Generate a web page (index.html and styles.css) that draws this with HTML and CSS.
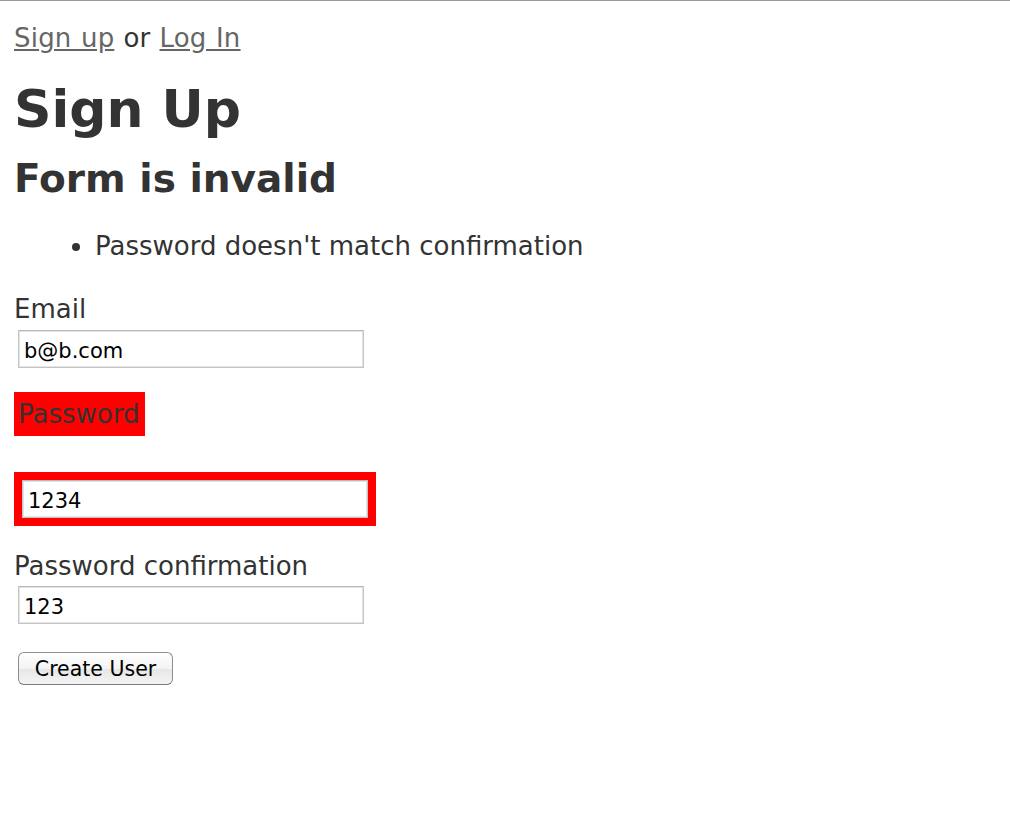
FILE: index.html
```html
<!DOCTYPE html>
<html>
<head>
<meta charset="utf-8">
<title>Sign Up</title>
<link rel="stylesheet" href="styles.css">
</head>
<body>
<div class="page">
  <p class="nav"><a href="#">Sign up</a> or <a href="#">Log In</a></p>
  <h1 class="title">Sign Up</h1>
  <div class="errors">
    <h2 class="errors-title">Form is invalid</h2>
    <ul class="errors-list">
      <li>Password doesn't match confirmation</li>
    </ul>
  </div>
  <form class="form">
    <div class="field">
      <label class="label" for="email">Email</label>
      <input class="input" id="email" type="text" value="b@b.com">
    </div>
    <div class="field field-pw">
      <div class="field-error label-error"><label class="label" for="pw">Password</label></div>
      <div class="field-error input-error"><input class="input" id="pw" type="text" value="1234"></div>
    </div>
    <div class="field field-conf">
      <label class="label" for="conf">Password confirmation</label>
      <input class="input" id="conf" type="text" value="123">
    </div>
    <div class="actions">
      <button class="button" type="button">Create User</button>
    </div>
  </form>
</div>
</body>
</html>
```

FILE: styles.css
```css
html, body {
  margin: 0;
  padding: 0;
  background: #fff;
}
body {
  border-top: 1px solid #9a9a9a;
  font-family: "DejaVu Sans", Verdana, sans-serif;
  font-size: 26px;
  line-height: 36px;
  color: #333;
}
.page {
  padding: 19px 14px 0 14px;
}
.nav {
  margin: 0;
  height: 36px;
  word-spacing: 1px;
}
.nav a {
  color: #666;
  text-decoration: underline;
  letter-spacing: 0.2px;
}
.title {
  margin: 23px 0 0 0;
  font-size: 52px;
  line-height: 60px;
  font-weight: bold;
}
.errors-title {
  margin: 17px 0 0 0;
  font-size: 39px;
  line-height: 46px;
  font-weight: bold;
}
.errors-list {
  margin: 26px 0 0 0;
  padding-left: 81px;
}
.form {
  margin: 27px 0 0 0;
}
.label {
  display: block;
}
.input {
  display: block;
  box-sizing: border-box;
  width: 346px;
  height: 38px;
  margin: 3px 0 0 4px;
  padding: 3px 5px 0 5px;
  border: 1px solid #c4c4c4;
  border-top-color: #b8b8b8;
  box-shadow: inset 0 0 0 1px #e4e4e4;
  background: #fff;
  font-family: "DejaVu Sans", "Lucida Grande", sans-serif;
  font-size: 21px;
  color: #000;
  outline: none;
}
.field-pw {
  margin-top: 24px;
}
.field-error {
  background: #ff0000;
  padding: 4px;
}
.label-error {
  display: table;
}
.label-error .label {
  padding-right: 2px;
}
.input-error {
  display: table;
  margin-top: 36px;
}
.input-error .input {
  margin: 4px;
}
.field-conf {
  margin-top: 22px;
}
.field-conf .input {
  margin-top: 2px;
}
.actions {
  margin-top: 28px;
}
.button {
  display: block;
  box-sizing: border-box;
  width: 155px;
  height: 33px;
  margin-left: 4px;
  padding: 0;
  border: 1px solid #8e8e8e;
  border-bottom-color: #7a7a7a;
  border-radius: 6px;
  background: linear-gradient(#ffffff, #f3f3f3 50%, #e6e6e6 51%, #f4f4f4);
  font-family: "DejaVu Sans", "Lucida Grande", sans-serif;
  font-size: 20.5px;
  color: #000;
}
```
